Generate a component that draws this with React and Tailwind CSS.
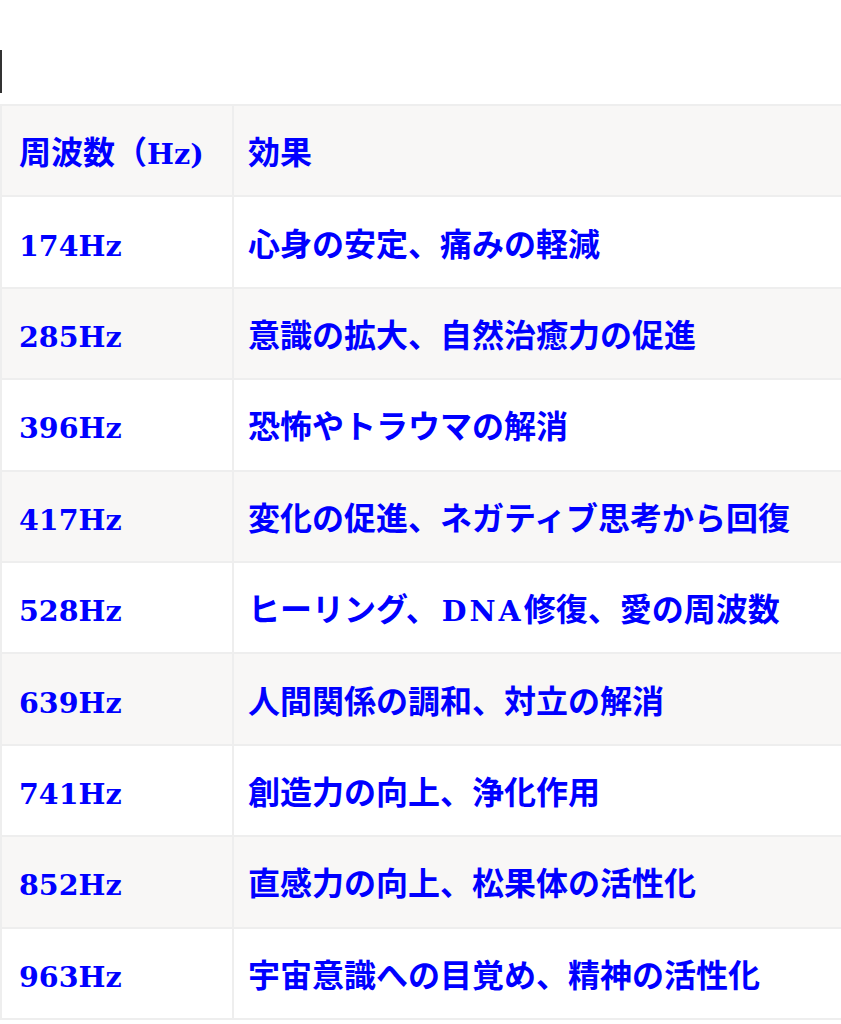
import React from "react";

const rows = [
  ["174Hz", ["心身の安定、痛みの軽減"]],
  ["285Hz", ["意識の拡大、自然治癒力の促進"]],
  ["396Hz", ["恐怖やトラウマの解消"]],
  ["417Hz", ["変化の促進、ネガティブ思考から回復"]],
  ["528Hz", ["ヒーリング、", "DNA", "修復、愛の周波数"]],
  ["639Hz", ["人間関係の調和、対立の解消"]],
  ["741Hz", ["創造力の向上、浄化作用"]],
  ["852Hz", ["直感力の向上、松果体の活性化"]],
  ["963Hz", ["宇宙意識への目覚め、精神の活性化"]],
];

const Latin = ({ children, wide }) => (
  <span
    className={`text-[28.5px] font-bold leading-none ${wide ? "tracking-[3px] pl-[4px]" : ""}`}
    style={{ fontFamily: '"DejaVu Serif", serif' }}
  >
    {children}
  </span>
);

const Cell = ({ first, children }) => (
  <td className="border-2 border-[#eeeeee] p-0 whitespace-nowrap">
    <div className={`h-[89.4px] flex items-center ${first ? "pl-[17px]" : "pl-[14px]"}`}>
      <div>{children}</div>
    </div>
  </td>
);

export default function App() {
  return (
    <div
      className="bg-white w-[841px] h-[1024px] overflow-hidden"
      style={{ fontFamily: '"Noto Sans CJK JP", sans-serif' }}
    >
      <div className="h-[50px]" />
      <div className="w-[2px] h-[43px] bg-[#333333]" />
      <div className="h-[11px]" />
      <table className="border-collapse w-[900px] font-bold text-[#0000ff] text-[32px] leading-[45px]">
        <colgroup>
          <col className="w-[232px]" />
          <col />
        </colgroup>
        <tbody>
          <tr className="bg-[#f8f7f6]">
            <Cell first>
              周波数（<Latin>Hz)</Latin>
            </Cell>
            <Cell>効果</Cell>
          </tr>
          {rows.map(([a, b], i) => (
            <tr key={a} className={i % 2 === 1 ? "bg-[#f8f7f6]" : "bg-white"}>
              <Cell first>
                <Latin>{a}</Latin>
              </Cell>
              <Cell>
                {b.map((part) =>
                  part === "DNA" ? (
                    <Latin key={part} wide>
                      {part}
                    </Latin>
                  ) : (
                    <span key={part}>{part}</span>
                  )
                )}
              </Cell>
            </tr>
          ))}
        </tbody>
      </table>
    </div>
  );
}
